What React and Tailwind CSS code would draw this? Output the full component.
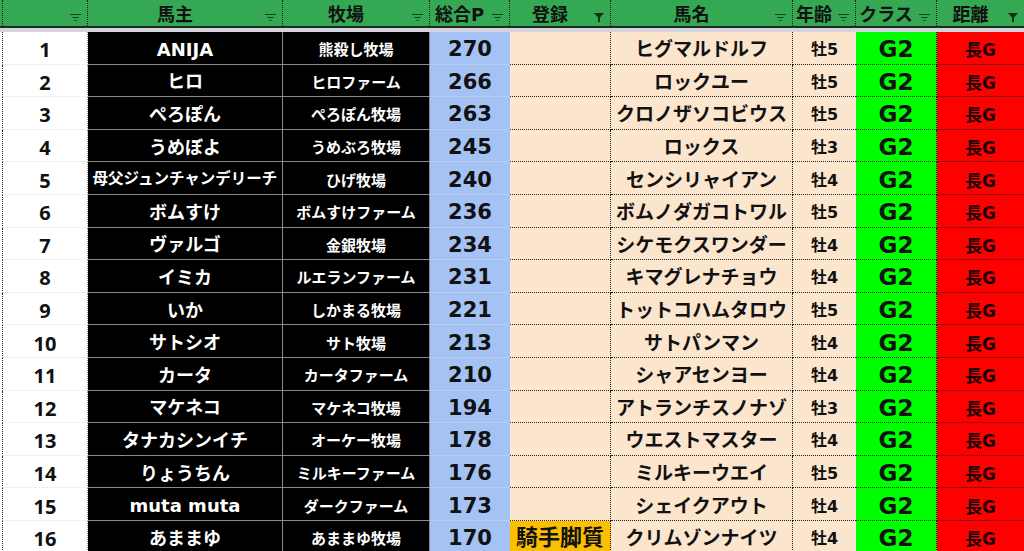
import React from "react";

const rows = [
  ["1", "ANIJA", "熊殺し牧場", "270", "", "ヒグマルドルフ", "牡5"],
  ["2", "ヒロ", "ヒロファーム", "266", "", "ロックユー", "牡5"],
  ["3", "ぺろぽん", "ぺろぽん牧場", "263", "", "クロノザソコビウス", "牡5"],
  ["4", "うめぼよ", "うめぶろ牧場", "245", "", "ロックス", "牡3"],
  ["5", "母父ジュンチャンデリーチ", "ひげ牧場", "240", "", "センシリャイアン", "牡4"],
  ["6", "ボムすけ", "ボムすけファーム", "236", "", "ボムノダガコトワル", "牡5"],
  ["7", "ヴァルゴ", "金銀牧場", "234", "", "シケモクスワンダー", "牡4"],
  ["8", "イミカ", "ルエランファーム", "231", "", "キマグレナチョウ", "牡4"],
  ["9", "いか", "しかまる牧場", "221", "", "トットコハムタロウ", "牡5"],
  ["10", "サトシオ", "サト牧場", "213", "", "サトパンマン", "牡4"],
  ["11", "カータ", "カータファーム", "210", "", "シャアセンヨー", "牡4"],
  ["12", "マケネコ", "マケネコ牧場", "194", "", "アトランチスノナゾ", "牡3"],
  ["13", "タナカシンイチ", "オーケー牧場", "178", "", "ウエストマスター", "牡4"],
  ["14", "りょうちん", "ミルキーファーム", "176", "", "ミルキーウエイ", "牡5"],
  ["15", "muta muta", "ダークファーム", "173", "", "シェイクアウト", "牡4"],
  ["16", "あままゆ", "あままゆ牧場", "170", "騎手脚質", "クリムゾンナイツ", "牡4"],
];

function FilterLines() {
  return (
    <svg width="11" height="8" viewBox="0 0 11 8" className="shrink-0">
      <rect x="0" y="0" width="11" height="1" fill="#143d21" />
      <rect x="2.5" y="3" width="6" height="1" fill="#143d21" />
      <rect x="4.5" y="6" width="2" height="1" fill="#143d21" />
    </svg>
  );
}

function FilterFunnel() {
  return (
    <svg width="10" height="9" viewBox="0 0 10 9" className="shrink-0">
      <polygon points="0,0 10,0 6,4.5 6,9 4,9 4,4.5" fill="#0f3319" />
    </svg>
  );
}

function HeaderCell({ label, filtered, last }) {
  return (
    <div
      className={
        "relative flex items-center justify-center pr-[20px] h-full " +
        (last ? "" : "border-r border-dotted border-[#1a1a1a]")
      }
    >
      <span className="text-[18px] font-bold text-[#111] leading-none pt-[3px]">{label}</span>
      <div className="absolute right-[6px] bottom-[4px] flex">
        {filtered ? <FilterFunnel /> : <FilterLines />}
      </div>
    </div>
  );
}

const cols =
  "grid grid-cols-[88px_195px_147px_80px_101px_182px_63px_81px_87px]";

export default function App() {
  return (
    <div className="w-[1024px] h-[551px] overflow-hidden bg-white font-['DejaVu_Sans','Noto_Sans_CJK_JP',sans-serif] font-bold">
      {/* header */}
      <div className={cols + " h-[26px] bg-[#35a853]"}>
        <div className="flex h-full">
          <div className="w-[2px]" />
          <div className="flex-1 border-l border-r border-dotted border-[#1a1a1a] relative">
            <div className="absolute right-[6px] bottom-[4px] flex">
              <FilterLines />
            </div>
          </div>
        </div>
        <HeaderCell label="馬主" />
        <HeaderCell label="牧場" />
        <HeaderCell label="総合P" />
        <HeaderCell label="登録" filtered />
        <HeaderCell label="馬名" />
        <HeaderCell label="年齢" />
        <HeaderCell label="クラス" />
        <HeaderCell label="距離" filtered last />
      </div>
      <div className="h-[2px] bg-[#1f2a22]" />
      <div className="h-[4px] bg-[#d2d5db]" />

      {/* rows */}
      {rows.map((r, i) => (
        <div key={i} className={cols + " h-[32.6px]"}>
          <div className="flex h-full bg-white">
            <div className="w-[2px]" />
            <div className="flex-1 flex items-center justify-center border-l border-dotted border-l-[#222] border-b border-b-[#e2e2e2] border-r border-r-[#9a9a9a] font-['Open_Sans',sans-serif] text-[20px] text-[#111] leading-none pt-[5px]">
              {r[0]}
            </div>
          </div>
          <div className="flex items-center justify-center bg-black border-r border-b border-[#8a8a8a] text-white leading-none pt-[4px]">
            <span className={i === 4 ? "text-[15.5px]" : "text-[18px]"}>{r[1]}</span>
          </div>
          <div className="flex items-center justify-center bg-black border-r border-b border-[#8a8a8a] text-white text-[15px] leading-none pt-[6px]">
            {r[2]}
          </div>
          <div className="flex items-center justify-center bg-[#a4c2f4] border-b border-[#bccdea] text-[21px] text-[#111] leading-none pt-[4px]">
            {r[3]}
          </div>
          <div
            className={
              "flex items-center justify-center border-r border-b border-dotted border-[#222] text-[22px] text-[#111] leading-none pt-[3px] " +
              (r[4] ? "bg-[#fcbf00]" : "bg-[#fce5cd]")
            }
          >
            {r[4]}
          </div>
          <div className="flex items-center justify-center bg-[#fce5cd] border-r border-b border-dotted border-[#222] text-[19px] text-[#111] leading-none pt-[4px]">
            {r[5]}
          </div>
          <div className="flex items-center justify-center bg-[#fce5cd] border-b border-dotted border-[#222] text-[16px] text-[#111] leading-none pt-[5px]">
            {r[6]}
          </div>
          <div className="flex items-center justify-center bg-[#00ff00] border-r border-b border-dotted border-[#222] text-[23px] text-[#111] leading-none pt-[4px]">
            G2
          </div>
          <div className="flex items-center justify-center bg-[#ff0000] border-b border-dotted border-[#222] text-[17px] text-[#1a0000] leading-none pt-[6px]">
            長G
          </div>
        </div>
      ))}
    </div>
  );
}
